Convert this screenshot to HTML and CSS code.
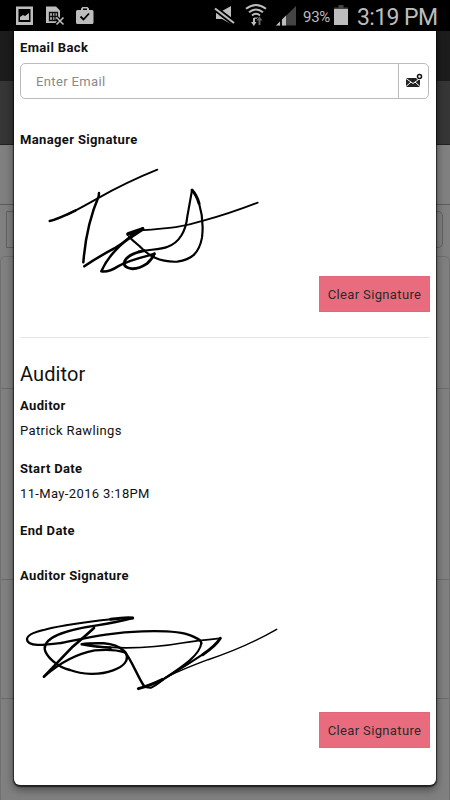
FILE: index.html
```html
<!DOCTYPE html>
<html lang="en">
<head>
    <meta charset="UTF-8">
    <meta name="viewport" content="width=device-width, initial-scale=1.0">
    <title>Audit</title>
    <link rel="stylesheet" href="styles.css">
</head>
<body>
    <div class="statusbar">
        <svg class="status-left" width="100" height="31" viewBox="0 0 100 31">
            <path fill="#bdbdbd" fill-rule="evenodd" d="M16 6.500h17V25H16zM18.500 9v13h12V9z"/>
            <path fill="#bdbdbd" d="M20 20v-3l3-2 2 1 4-3v7z"/>
            <path fill="#bdbdbd" d="M46 6.500h10l4 4V23H46z"/>
            <path fill="none" stroke="#111" stroke-width="1.300" d="M49.500 12.500h8v8h-8zM49.500 16.500h8M52.500 12.500v8M55 12.500v8"/>
            <path fill="none" stroke="#000" stroke-width="4" d="M57 18l6 6M63 18l-6 6"/>
            <path fill="none" stroke="#bdbdbd" stroke-width="1.600" d="M56.500 17.500l7 7M63.500 17.500l-7 7"/>
            <path fill="#bdbdbd" fill-rule="evenodd" d="M77.500 10h3.500V8.500l1.500-1.500h5L89 8.500V10h3q1.500 0 1.500 1.500v11q0 1.500-1.500 1.500H77.500q-1.500 0-1.500-1.500v-11q0-1.500 1.500-1.500zM83 10h4V8.500h-4z"/>
            <path fill="none" stroke="#000" stroke-width="1.800" d="M80.500 16.500l3 3 5.500-6"/>
        </svg>
        <svg class="status-right" width="84" height="31" viewBox="214 0 84 31">
            <path fill="#bdbdbd" d="M216 11h6l9-5v18l-9-5h-6z"/>
            <path fill="none" stroke="#000" stroke-width="5.500" d="M215 8.500l19 14.500"/>
            <path fill="none" stroke="#bdbdbd" stroke-width="2.200" d="M215 8.500l19 14.500"/>
            <path fill="none" stroke="#bdbdbd" stroke-width="2" d="M246 8.800q10-7.500 20 0M249 12.300q7-5.500 14 0M252 15.500q4-3.500 8 0"/>
            <path fill="#bdbdbd" d="M253.800 17.500h4.400L256 19zM253 18h2v4h1.500l-2.700 4-2.800-4h2z"/>
            <path fill="#666" d="M258.500 25v-4.500h-2l3-4 3 4h-2V25z"/>
            <path fill="#444" d="M276 25.500L296 6v19.500z"/>
            <path fill="#bdbdbd" d="M276 25.500l4-4v4zM282 25.500v-6l4-4v10z"/>
            <path stroke="#000" stroke-width="1.500" d="M281 18v8"/>
        </svg>
        <span class="percent">93%</span>
        <svg class="battery" width="14" height="31" viewBox="0 0 14 31">
            <path fill="#444" d="M4.500 5h5v2.500H14v3H0v-3h4.500z"/>
            <path fill="#bdbdbd" d="M0 9h14v16H0z"/>
        </svg>
        <span class="clock">3:19 PM</span>
    </div>

    <div class="page">
        <div class="navbar"></div>
        <div class="subbar"></div>
        <div class="page-title"></div>
        <div class="page-input"></div>
        <div class="page-list">
            <div class="row-a"></div>
            <div class="row-b"></div>
            <div class="row-c"></div>
        </div>

        <div class="modal">
            <label class="label" for="email">Email Back</label>
            <div class="input-group">
                <input type="email" id="email" placeholder="Enter Email">
                <button class="mail-button" aria-label="Send email">
                    <svg width="18" height="16" viewBox="0 0 18 16">
                        <path fill="#222" d="M1 5h14v9H1z"/>
                        <path fill="none" stroke="#fff" stroke-width="1" d="M1 5.500l7 5 7-5M1 13.500l5-4.500M15 13.500l-5-4.500"/>
                        <circle cx="14.500" cy="3.500" r="3.500" fill="#fff"/>
                        <circle cx="14.500" cy="3.500" r="2" fill="#fff" stroke="#111" stroke-width="1.500"/>
                    </svg>
                </button>
            </div>

            <div class="label manager-label">Manager Signature</div>
            <svg class="signature manager-signature" width="240" height="126" viewBox="0 0 720 378">
                <path stroke-width="7" d="M59 213Q82 208 137 181"/>
                <path stroke-width="5.500" d="M112 194Q150 175 203 145Q290 96 382 59"/>
                <path stroke-width="7.500" d="M207 129L206 139Q169 225 160 337"/>
                <path stroke-width="7.500" d="M163 349Q205 320 257 293Q285 276 338 235"/>
                <path stroke-width="11" d="M294 252Q316 244 338 237L305 259"/>
                <path stroke-width="7.500" d="M301 260C262 291 229 328 214 364Q235 368 264 349C300 329 339 321 373 312"/>
                <path stroke-width="8.500" d="M373 311Q368 326 351 341Q325 358 304 356Q283 352 282 340C287 315 321 307 343 302"/>
                <path stroke-width="6.500" d="M325 305C359 298 392 299 413 290C449 278 468 241 472 199Q480 155 486 121"/>
                <path stroke-width="9" d="M486 120Q501 137 507 160"/>
                <path stroke-width="6.500" d="M507 159C519 199 520 231 516 263C507 311 484 329 442 335C387 337 357 318 328 288Q310 273 297 260"/>
                <path stroke-width="5.500" d="M330 241C424 235 459 231 520 212Q595 192 683 158"/>
            </svg>
            <button class="clear-button">Clear Signature</button>

            <hr>

            <h2>Auditor</h2>
            <div class="label">Auditor</div>
            <div class="value">Patrick Rawlings</div>
            <div class="label">Start Date</div>
            <div class="value">11-May-2016 3:18PM</div>
            <div class="label">End Date</div>
            <div class="label auditor-label">Auditor Signature</div>
            <svg class="signature auditor-signature" width="280" height="112" viewBox="0 0 840 336">
                <path stroke-width="8" d="M252 84Q226 108 188 140L102 230"/>
                <path stroke-width="7" d="M102 230C154 184 200 161 254 151Q310 146 345 157"/>
                <path stroke-width="7" d="M345 155C363 182 337 201 309 211C269 226 216 224 180 210C140 201 107 167 104 147C102 105 187 87 261 76Q320 67 368 54"/>
                <path stroke-width="9" d="M368 54Q350 51 302 58"/>
                <path stroke-width="6" d="M304 58C225 66 158 76 104 89C61 98 50 108 51 119"/>
                <path stroke-width="7" d="M51 117C51 142 104 135 153 129C244 111 312 96 397 94C459 92 514 94 543 107C569 118 575 123 574 131"/>
                <path stroke-width="6.500" d="M574 129C570 165 520 198 466 234Q433 260 423 263Q410 264 403 258"/>
                <path stroke-width="7.500" d="M402 258C383 231 363 175 342 153Q321 133 281 130Q239 129 215 133Q246 140 302 143"/>
                <path stroke-width="5" d="M260 140C353 147 444 142 516 129Q560 122 629 115"/>
                <path stroke-width="9" d="M631 115Q617 138 578 164"/>
                <path stroke-width="6.500" d="M583 160Q529 196 466 234"/>
                <path stroke-width="9" d="M385 266Q419 257 458 238"/>
                <path stroke-width="4.500" d="M455 239Q501 214 594 179Q704 143 800 88"/>
            </svg>
            <button class="clear-button">Clear Signature</button>
        </div>
    </div>
</body>
</html>
```
FILE: styles.css
```css
* {
    box-sizing: border-box;
}
body {
    margin: 0;
    height: 800px;
    overflow: hidden;
    font-family: Roboto, "Liberation Sans", sans-serif;
    font-size: 13px;
    letter-spacing: 0.36px;
    color: #111;
    background-color: #808080;
}
.statusbar {
    display: flex;
    align-items: center;
    height: 31px;
    padding-right: 13px;
    background-color: #000;
    color: #bdbdbd;
    letter-spacing: 0;
}
.status-right {
    margin-left: auto;
}
.percent {
    width: 31px;
    padding-top: 2px;
    margin-left: 5px;
    font-size: 15px;
    letter-spacing: -0.3px;
}
.clock {
    width: 80px;
    margin-left: 9px;
    padding-top: 4px;
    font-size: 23px;
    letter-spacing: -0.6px;
    white-space: nowrap;
}
.page {
    position: relative;
    height: 769px;
}
.navbar {
    height: 50px;
    background-color: #1c1c1c;
}
.subbar {
    height: 64px;
    background-color: #363636;
    border-bottom: 1px solid #222;
}
.page-title {
    height: 60px;
    border-bottom: 1px solid #5c5c5c;
}
.page-input {
    height: 37px;
    margin: 6px 7px 0 6px;
    border: 1px solid #626262;
    border-radius: 0 5px 5px 0;
}
.page-list {
    height: 560px;
    margin-top: 8px;
    border: 1px solid #707070;
    border-radius: 5px;
}
.page-list div {
    border-bottom: 1px solid #6b6b6b;
}
.row-a {
    height: 132px;
}
.row-b {
    height: 191px;
}
.row-c {
    height: 119px;
}
.modal {
    position: absolute;
    top: 0;
    left: 14px;
    display: flex;
    flex-direction: column;
    width: 422px;
    height: 754px;
    padding: 7px 6px 0;
    background-color: #fff;
    border-radius: 0 0 6px 6px;
    box-shadow: 0 1px 1px 1px rgba(0, 0, 0, 0.6), 0 4px 10px rgba(0, 0, 0, 0.5);
}
.label {
    height: 20px;
    font-weight: bold;
    line-height: 20px;
}
.input-group {
    display: flex;
    width: 409px;
    height: 36px;
    margin-top: 5px;
    border: 1px solid #bbb;
    border-radius: 5px;
}
.input-group input {
    flex: 1;
    min-width: 0;
    padding: 0 15px;
    border: none;
    background: none;
    font: inherit;
    letter-spacing: inherit;
}
.input-group input::placeholder {
    color: #8a8a8a;
}
.mail-button {
    display: flex;
    align-items: center;
    justify-content: center;
    width: 30px;
    padding: 0;
    border: none;
    border-left: 1px solid #bbb;
    background: none;
}
.manager-label {
    margin-top: 31px;
}
.signature {
    display: block;
    fill: none;
    stroke: #000;
    stroke-linecap: round;
    stroke-linejoin: round;
}
.manager-signature {
    margin-left: 10px;
}
.clear-button {
    align-self: flex-end;
    width: 111px;
    height: 36px;
    padding: 0;
    border: 1px solid #e5677b;
    background-color: #e96b7e;
    color: #292b2c;
    font: inherit;
    letter-spacing: inherit;
}
hr {
    width: 410px;
    margin: 25px 0 0;
    border: none;
    border-top: 1px solid #e5e5e5;
}
h2 {
    height: 28px;
    margin: 22px 0 8px;
    font-size: 20px;
    font-weight: normal;
    line-height: 28px;
    letter-spacing: 0.1px;
}
.value {
    height: 20px;
    margin: 5px 0 17.5px;
    line-height: 20px;
}
.auditor-label {
    margin-top: 25px;
}
.auditor-signature {
    margin: 14px 0 0 -10px;
}
```
